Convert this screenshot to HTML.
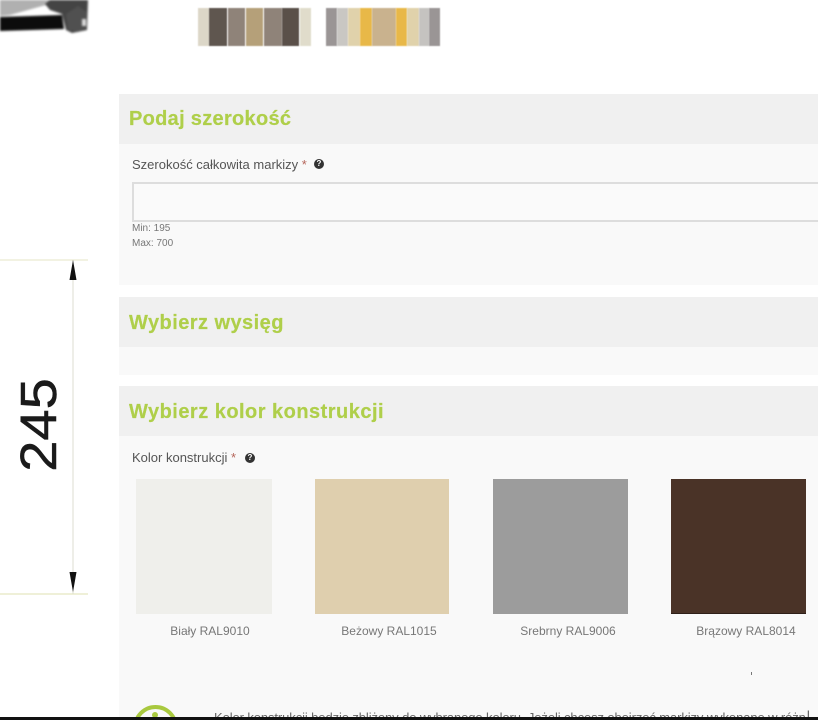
<!DOCTYPE html>
<html lang="pl">
<head>
<meta charset="utf-8">
<style>
html,body{margin:0;padding:0;background:#fff;width:818px;height:720px;overflow:hidden}
#p{position:relative;width:818px;height:720px;overflow:hidden;font-family:"Liberation Sans",sans-serif;color:#555;background:#fff}
.a{position:absolute}
.panel{position:absolute;left:119px;width:699px;background:#f9f9f9}
.head{position:absolute;left:119px;width:699px;height:50px;background:#f0f0f0}
.h{position:absolute;left:129px;font-size:20px;font-weight:bold;color:#afcf4a;white-space:nowrap;line-height:24px;filter:blur(.3px);letter-spacing:.45px;-webkit-text-stroke:.2px #afcf4a}
.lab{position:absolute;left:132px;font-size:13px;color:#555;white-space:nowrap;line-height:16px;filter:blur(.2px)}
.star{color:#b5655a}
.q{position:absolute;width:10px;height:10px;border-radius:50%;background:#333;color:#fff;font-size:8px;font-weight:bold;line-height:10px;text-align:center}
.sw{position:absolute;top:479px;height:135px}
.cap{position:absolute;top:623px;font-size:12px;line-height:16px;color:#777;white-space:nowrap;text-align:center;width:130px;filter:blur(.2px)}
.st{position:absolute;top:8px;height:38px;filter:blur(.6px)}
</style>
</head>
<body>
<div id="p">

<svg class="a" style="left:0;top:0;filter:blur(1.1px)" width="96" height="40" viewBox="0 0 96 40">
<polygon points="0,0 52,0 46,5 10,15 0,16" fill="#b0b0b0"/>
<polygon points="0,17 62,15 64,29 0,31" fill="#0c0c0c"/>
<polygon points="45,4 50,0 88,0 87,30 72,33 66,30 62,14 50,10" fill="#444"/>
<polygon points="66,14 78,6 87,12 87,28 78,32 68,30" fill="#505050"/>
<rect x="82" y="19" width="4" height="7" fill="#ddd"/>
</svg>

<div class="st" style="left:198px;width:11px;background:#dcd7c8"></div>
<div class="st" style="left:209px;width:18px;background:#5f564f"></div>
<div class="st" style="left:228px;width:17px;background:#8f8379"></div>
<div class="st" style="left:246px;width:17px;background:#b5a079"></div>
<div class="st" style="left:264px;width:18px;background:#8f8379"></div>
<div class="st" style="left:282px;width:17px;background:#5a5049"></div>
<div class="st" style="left:300px;width:11px;background:#e0dccb"></div>

<div class="st" style="left:326px;width:11px;background:#9a9595"></div>
<div class="st" style="left:337px;width:11px;background:#c9c7c3"></div>
<div class="st" style="left:348px;width:12px;background:#e0d2ab"></div>
<div class="st" style="left:360px;width:12px;background:#e8b848"></div>
<div class="st" style="left:372px;width:24px;background:#c9b28e"></div>
<div class="st" style="left:396px;width:11px;background:#e8b848"></div>
<div class="st" style="left:407px;width:12px;background:#e0d2ab"></div>
<div class="st" style="left:419px;width:10px;background:#c5c3c0"></div>
<div class="st" style="left:429px;width:11px;background:#9a9595"></div>

<svg class="a" style="left:0;top:250px" width="100" height="350" viewBox="0 250 100 350">
<line x1="0" y1="260" x2="88" y2="260" stroke="#e6e6c4" stroke-width="1"/>
<line x1="0" y1="594" x2="88" y2="594" stroke="#dfe0b0" stroke-width="1"/>
<line x1="73" y1="260" x2="73" y2="594" stroke="#deded0" stroke-width="1"/>
<polygon points="73,260 69.5,280 76.5,280" fill="#111"/>
<polygon points="73,592 69.5,572 76.5,572" fill="#111"/>
</svg>
<div class="a" style="left:-6px;top:394px;width:90px;height:62px;line-height:62px;text-align:center;font-size:51px;color:#1a1a1a;transform:rotate(-90deg) scaleX(1.1);white-space:nowrap;-webkit-text-stroke:.5px #1a1a1a">245</div>

<div class="panel" style="top:94px;height:191px"></div>
<div class="head" style="top:94px"></div>
<div class="h" style="top:107px;letter-spacing:.3px">Podaj szerokość</div>
<div class="lab" style="top:157px">Szerokość całkowita markizy <span class="star">*</span></div>
<div class="q" style="left:314px;top:159px">?</div>
<div class="a" style="left:132px;top:182px;width:700px;height:36px;border:2px solid #ddd;background:#fafafa"></div>
<div class="a" style="left:132px;top:222px;font-size:10px;line-height:14.5px;color:#777">Min: 195<br>Max: 700</div>

<div class="panel" style="top:297px;height:78px"></div>
<div class="head" style="top:297px"></div>
<div class="h" style="top:311px">Wybierz wysięg</div>

<div class="panel" style="top:386px;height:331px"></div>
<div class="head" style="top:386px"></div>
<div class="h" style="top:400px;letter-spacing:.48px">Wybierz kolor konstrukcji</div>
<div class="lab" style="top:450px">Kolor konstrukcji <span class="star">*</span></div>
<div class="q" style="left:245px;top:453px">?</div>

<div class="sw" style="left:136px;width:136px;background:#efefeb"></div>
<div class="sw" style="left:315px;width:134px;background:#dfcfae"></div>
<div class="sw" style="left:493px;width:135px;background:#9c9c9c"></div>
<div class="sw" style="left:671px;width:135px;height:134px;border-bottom:1px solid #2e2019;background:#4a3327"></div>

<div class="cap" style="left:145px">Biały RAL9010</div>
<div class="cap" style="left:324px">Beżowy RAL1015</div>
<div class="cap" style="left:503px">Srebrny RAL9006</div>
<div class="cap" style="left:681px">Brązowy RAL8014</div>

<div class="a" style="left:751px;top:672px;width:1px;height:3px;background:#777"></div>

<div class="a" style="left:133px;top:705px;width:37px;height:37px;border:4px solid #a9c93f;border-radius:50%"></div>
<div class="a" style="left:152px;top:712px;width:6px;height:6px;border-radius:50%;background:#a9c93f"></div>
<div class="a" style="left:214px;top:710px;font-size:13px;line-height:16px;color:#666;white-space:nowrap;filter:blur(.2px);letter-spacing:-.1px">Kolor konstrukcji będzie zbliżony do wybranego koloru. Jeżeli chcesz obejrzeć markizy wykonane w różn</div>
<div class="a" style="left:807px;top:710px;font-size:9px;line-height:9px;color:#222">I</div>
<div class="a" style="left:0;top:717px;width:818px;height:3px;background:#111"></div>

</div>
</body>
</html>
